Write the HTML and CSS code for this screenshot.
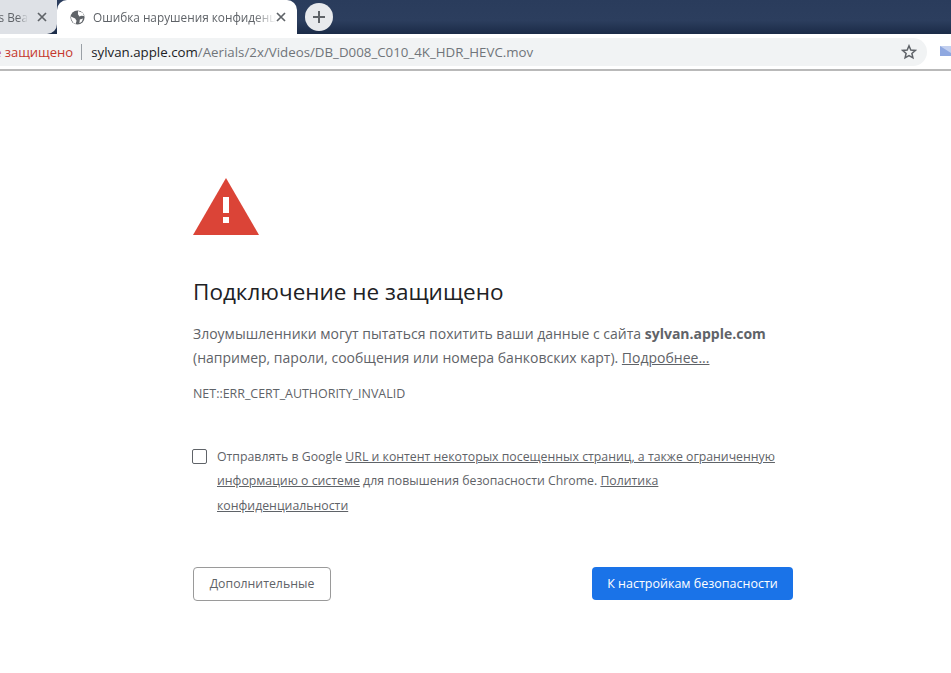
FILE: index.html
```html
<!DOCTYPE html>
<html lang="ru">
<head>
    <meta charset="UTF-8">
    <meta name="viewport" content="width=device-width, initial-scale=1.0">
    <title>Ошибка нарушения конфиденциальности</title>
    <link rel="stylesheet" href="styles.css">
</head>
<body>
    <div class="tabbar">
        <div class="tab">
            <span class="tab-title">s Bea</span>
            <svg class="tab-close" viewBox="0 0 10 10"><path d="M1 1l8 8M9 1l-8 8"/></svg>
        </div>
        <div class="tab active">
            <svg class="globe" viewBox="0 0 16 16">
                <circle cx="8" cy="8" r="7.500" fill="#5f6368"/>
                <path d="M8.500 1l5 2 1.500 3.500-3-.5-2 1-1.500-2.500zM1 7l4.500 2 1.500 2.500-1 3.500-2.500-1.500-2-3.500zM10.500 10l3.500-1-1.500 3.500-2.500 1.500z" fill="#fff"/>
            </svg>
            <span class="tab-title">Ошибка нарушения конфиденц</span>
            <svg class="tab-close" viewBox="0 0 10 10"><path d="M1 1l8 8M9 1l-8 8"/></svg>
        </div>
        <div class="new-tab">
            <svg viewBox="0 0 14 14"><path d="M7 1v12M1 7h12"/></svg>
        </div>
    </div>

    <div class="toolbar">
        <div class="omnibox">
            <span class="not-secure">е защищено</span>
            <span class="divider"></span>
            <span class="url"><span class="host">sylvan.apple.com</span>/Aerials/2x/Videos/DB_D008_C010_4K_HDR_HEVC.mov</span>
            <svg class="star" viewBox="0 0 16 16"><path d="M8 1.800l1.800 4.200 4.500.4-3.400 3 1 4.400L8 11.500l-3.900 2.300 1-4.400-3.400-3 4.500-.4z"/></svg>
        </div>
        <svg class="ext" viewBox="0 0 11 10"><path d="M0 0h11v10H0z" fill="#8fa8e0"/><path d="M0 0l11 7V0z" fill="#c3d0ef"/></svg>
    </div>

    <div class="container">
        <svg class="warning" viewBox="0 0 66 57">
            <path d="M33 0l33 57H0z" fill="#db4437"/>
            <path d="M30 19h6v16h-6zM30 39h6v6h-6z" fill="#fff"/>
        </svg>
        <h1>Подключение не защищено</h1>
        <p class="message">Злоумышленники могут пытаться похитить ваши данные с сайта <b>sylvan.apple.com</b> (например, пароли, сообщения или номера банковских карт). <a href="#">Подробнее...</a></p>
        <div class="error-code">NET::ERR_CERT_AUTHORITY_INVALID</div>
        <div class="optin">
            <span class="checkbox"></span>
            <p>Отправлять в Google <a href="#">URL и контент некоторых посещенных страниц, а также ограниченную информацию о системе</a> для повышения безопасности Chrome. <a href="#">Политика конфиденциальности</a></p>
        </div>
        <div class="buttons">
            <button class="btn-details">Дополнительные</button>
            <button class="btn-primary">К настройкам безопасности</button>
        </div>
    </div>
</body>
</html>
```
FILE: styles.css
```css
* {
    box-sizing: border-box;
    margin: 0;
    padding: 0;
}

html, body {
    height: 100%;
    overflow: hidden;
}

body {
    font-family: "Open Sans", "Noto Sans", sans-serif;
    background-color: #fff;
    color: #5f6368;
}

a {
    color: #5f6368;
}

.tabbar {
    display: flex;
    align-items: flex-end;
    height: 34px;
    background: linear-gradient(#2a3c5c 0, #2c3e5e 60%, #1b2b47 100%);
}

.tab {
    display: flex;
    align-items: center;
    height: 34px;
    font-size: 11.800px;
    white-space: nowrap;
}

.tab:first-child {
    width: 57px;
    justify-content: flex-end;
    padding-right: 10px;
    background-color: #dee1e6;
    border-radius: 0 0 10px 0;
}

.tab:first-child .tab-title {
    margin-right: 9px;
    -webkit-mask-image: linear-gradient(90deg, #000 65%, transparent);
    mask-image: linear-gradient(90deg, #000 65%, transparent);
}

.tab.active {
    width: 240px;
    padding: 0 11px 0 13px;
    background-color: #fff;
    border-radius: 10px 10px 0 0;
}

.tab.active .tab-title {
    flex: 1;
    margin-left: 8px;
    overflow: hidden;
    -webkit-mask-image: linear-gradient(90deg, #000 88%, transparent);
    mask-image: linear-gradient(90deg, #000 88%, transparent);
}

.globe {
    width: 15px;
    height: 15px;
    flex-shrink: 0;
}

.tab-close {
    width: 10px;
    height: 10px;
    flex-shrink: 0;
    fill: none;
    stroke: #5f6368;
    stroke-width: 1.700;
}

.new-tab {
    display: flex;
    align-items: center;
    justify-content: center;
    width: 28px;
    height: 28px;
    margin: 0 0 3px 8px;
    border-radius: 50%;
    background-color: #e8eaed;
}

.new-tab svg {
    width: 14px;
    height: 14px;
    fill: none;
    stroke: #5f6368;
    stroke-width: 2;
}

.toolbar {
    display: flex;
    align-items: flex-start;
    height: 37px;
    padding-top: 4px;
    background-color: #fff;
    border-bottom: 2px solid #b9b9b9;
}

.omnibox {
    display: flex;
    align-items: center;
    width: 927px;
    height: 28px;
    padding-right: 10px;
    background-color: #f1f3f4;
    border-radius: 0 14px 14px 0;
    font-size: 13.300px;
    white-space: nowrap;
}

.not-secure {
    margin-left: -6px;
    color: #c5372c;
    font-size: 13px;
}

.divider {
    width: 1px;
    height: 16px;
    margin: 0 9px 0 8px;
    background-color: #9aa0a6;
}

.url {
    flex: 1;
    color: #70757a;
}

.host {
    color: #202124;
}

.star {
    width: 16px;
    height: 16px;
    fill: none;
    stroke: #5f6368;
    stroke-width: 1.500;
}

.ext {
    width: 11px;
    height: 10px;
    margin: 8px 0 0 13px;
}

.container {
    width: 600px;
    margin-left: 193px;
    padding-top: 107px;
}

.warning {
    display: block;
    width: 66px;
    height: 57px;
}

h1 {
    margin-top: 41px;
    color: #202124;
    font-size: 22.500px;
    font-weight: 400;
    line-height: 32px;
}

.message {
    margin-top: 14px;
    font-size: 14px;
    line-height: 24px;
}

.error-code {
    margin-top: 12px;
    font-size: 12.450px;
    line-height: 24px;
}

.optin {
    display: flex;
    margin-top: 39px;
    font-size: 12.300px;
    line-height: 24.300px;
}

.optin p {
    max-width: 565px;
}

.checkbox {
    flex-shrink: 0;
    width: 15px;
    height: 15px;
    margin: 4px 10px 0 -1px;
    border: 1px solid #5f6368;
    border-radius: 2px;
}

.buttons {
    display: flex;
    justify-content: space-between;
    align-items: flex-start;
    margin-top: 49px;
}

button {
    font-family: inherit;
    font-size: 12.300px;
    border-radius: 4px;
    cursor: pointer;
}

.btn-details {
    width: 138px;
    height: 34px;
    color: #5f6368;
    background-color: #fff;
    border: 1px solid #9a9a9a;
}

.btn-primary {
    width: 201px;
    height: 33px;
    font-size: 12.500px;
    color: #fff;
    background-color: #1a73e8;
    border: none;
}
```
